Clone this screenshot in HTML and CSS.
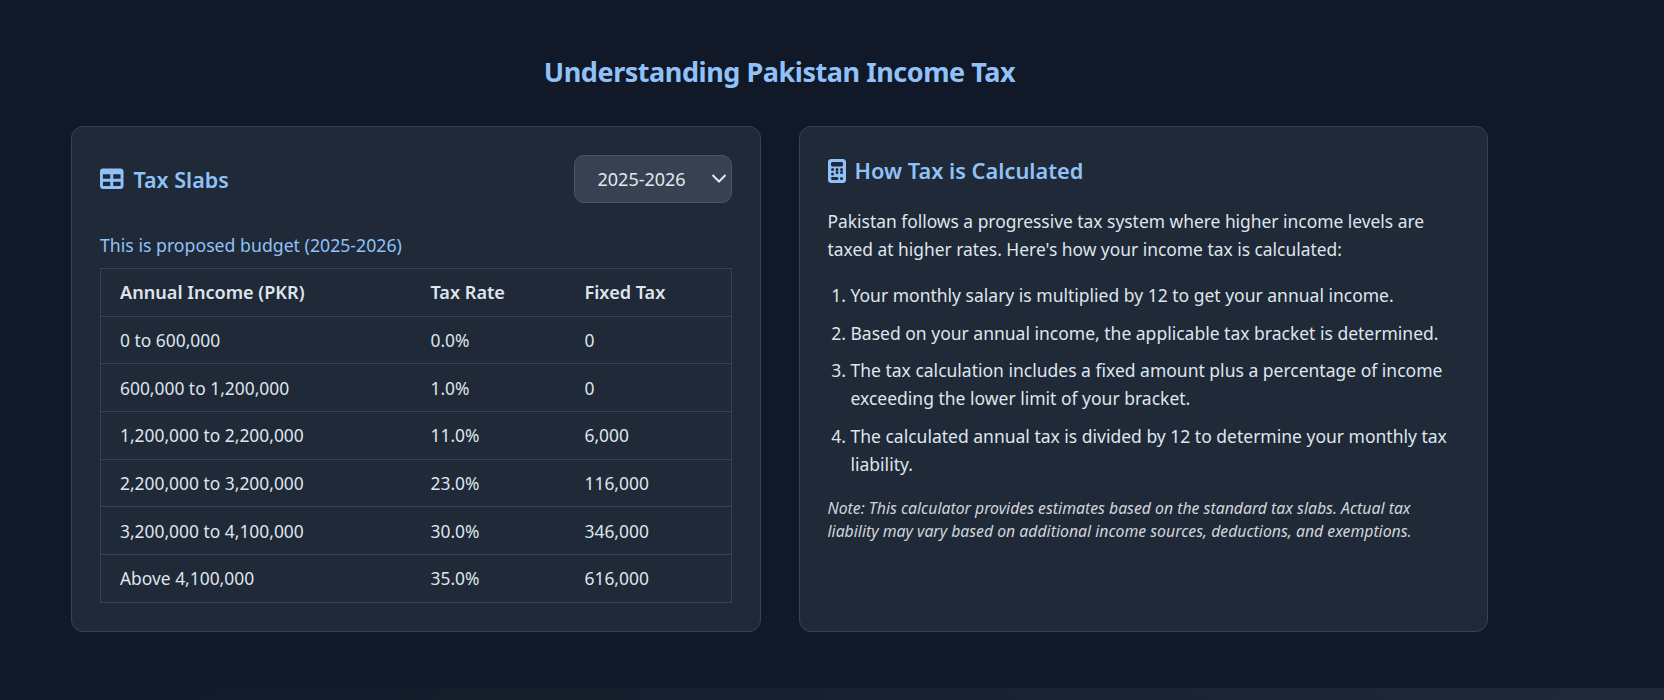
FILE: index.html
```html
<!DOCTYPE html>
<html lang="en">
<head>
    <meta charset="UTF-8">
    <meta name="viewport" content="width=device-width, initial-scale=1.0">
    <title>Understanding Pakistan Income Tax</title>
    <link rel="stylesheet" href="styles.css">
</head>
<body>
    <main class="info-section">
        <h2 class="section-title">Understanding Pakistan Income Tax</h2>
        <div class="info-grid">
            <section class="card">
                <div class="card-top">
                    <h3 class="card-title">
                        <svg class="icon icon-table" viewBox="0 0 512 512"><path d="M64 256l0-96 160 0 0 96L64 256zm0 64l160 0 0 96L64 416l0-96zm224 96l0-96 160 0 0 96-160 0zM448 256l-160 0 0-96 160 0 0 96zM64 32C28.7 32 0 60.7 0 96L0 416c0 35.3 28.7 64 64 64l384 0c35.3 0 64-28.7 64-64l0-320c0-35.3-28.7-64-64-64L64 32z"/></svg>
                        Tax Slabs
                    </h3>
                    <div class="year-select">
                        <select>
                            <option>2025-2026</option>
                            <option>2024-2025</option>
                        </select>
                        <svg class="chevron" viewBox="0 0 16 16"><path d="M1.500 4 8 10.500 14.500 4"/></svg>
                    </div>
                </div>
                <p class="budget-note">This is proposed budget (2025-2026)</p>
                <table class="slabs">
                    <thead>
                        <tr>
                            <th>Annual Income (PKR)</th>
                            <th>Tax Rate</th>
                            <th>Fixed Tax</th>
                        </tr>
                    </thead>
                    <tbody>
                        <tr><td>0 to 600,000</td><td>0.0%</td><td>0</td></tr>
                        <tr><td>600,000 to 1,200,000</td><td>1.0%</td><td>0</td></tr>
                        <tr><td>1,200,000 to 2,200,000</td><td>11.0%</td><td>6,000</td></tr>
                        <tr><td>2,200,000 to 3,200,000</td><td>23.0%</td><td>116,000</td></tr>
                        <tr><td>3,200,000 to 4,100,000</td><td>30.0%</td><td>346,000</td></tr>
                        <tr><td>Above 4,100,000</td><td>35.0%</td><td>616,000</td></tr>
                    </tbody>
                </table>
            </section>

            <section class="card">
                <h3 class="card-title how-title">
                    <svg class="icon icon-calc" viewBox="0 0 384 512"><path d="M64 0C28.7 0 0 28.7 0 64L0 448c0 35.3 28.7 64 64 64l256 0c35.3 0 64-28.7 64-64l0-384c0-35.3-28.7-64-64-64L64 0zM96 64l192 0c17.7 0 32 14.3 32 32l0 32c0 17.7-14.3 32-32 32L96 160c-17.7 0-32-14.3-32-32l0-32c0-17.7 14.3-32 32-32zm32 160a32 32 0 1 1 -64 0 32 32 0 1 1 64 0zM96 352a32 32 0 1 1 0-64 32 32 0 1 1 0 64zM64 416c0-17.7 14.3-32 32-32l96 0c17.7 0 32 14.3 32 32s-14.3 32-32 32l-96 0c-17.7 0-32-14.3-32-32zM192 256a32 32 0 1 1 0-64 32 32 0 1 1 0 64zm32 32a32 32 0 1 1 -64 0 32 32 0 1 1 64 0zm64-32a32 32 0 1 1 0-64 32 32 0 1 1 0 64zm32 32a32 32 0 1 1 -64 0 32 32 0 1 1 64 0zM288 448a32 32 0 1 1 0-64 32 32 0 1 1 0 64z"/></svg>
                    How Tax is Calculated
                </h3>
                <p class="how-text">Pakistan follows a progressive tax system where higher income levels are taxed at higher rates. Here's how your income tax is calculated:</p>
                <ol class="how-steps">
                    <li>Your monthly salary is multiplied by 12 to get your annual income.</li>
                    <li>Based on your annual income, the applicable tax bracket is determined.</li>
                    <li>The tax calculation includes a fixed amount plus a percentage of income exceeding the lower limit of your bracket.</li>
                    <li>The calculated annual tax is divided by 12 to determine your monthly tax liability.</li>
                </ol>
                <p class="how-note">Note: This calculator provides estimates based on the standard tax slabs. Actual tax liability may vary based on additional income sources, deductions, and exemptions.</p>
            </section>
        </div>
    </main>
    <footer class="page-footer"></footer>
</body>
</html>
```

FILE: styles.css
```css
* {
    box-sizing: border-box;
}

body {
    margin: 0;
    height: 700px;
    overflow: hidden;
    display: flex;
    flex-direction: column;
    font-family: "Noto Sans", "Open Sans", sans-serif;
    color: #dfe5ec;
    background-color: #111827;
}

.info-section {
    flex: 1;
    padding: 53px 176px 0 71px;
}

.section-title {
    margin: 0 0 35px;
    text-align: center;
    font-size: 27px;
    line-height: 38px;
    font-weight: 700;
    letter-spacing: -0.45px;
    color: #90c2f9;
}

.info-grid {
    display: grid;
    grid-template-columns: 1fr 1fr;
    gap: 38px;
}

.card {
    height: 506px;
    padding: 28px;
    background-color: #1f2937;
    border: 1px solid #374151;
    border-radius: 12px;
}

.card-top {
    display: flex;
    justify-content: space-between;
    align-items: center;
    margin-bottom: 29px;
}

.card-title {
    display: flex;
    align-items: center;
    gap: 10px;
    margin: 0;
    font-size: 21.5px;
    font-weight: 600;
    color: #90c2f9;
}

.icon {
    fill: #90c2f9;
    flex: none;
}

.icon-table {
    width: 23.5px;
    height: 23.5px;
}

.icon-calc {
    width: 18px;
    height: 24px;
}

.how-title {
    gap: 9px;
    margin: 1px 0 22px;
    font-size: 21.8px;
}

.year-select {
    position: relative;
}

.year-select select {
    appearance: none;
    display: block;
    width: 158px;
    height: 48px;
    padding: 0 0 0 23px;
    font: inherit;
    font-size: 18px;
    color: #e2e8f0;
    background-color: #374151;
    border: 1px solid #4b5563;
    border-radius: 10px;
}

.chevron {
    position: absolute;
    top: 16px;
    right: 5px;
    width: 16px;
    height: 16px;
    fill: none;
    stroke: #e2e8f0;
    stroke-width: 2;
}

.budget-note {
    margin: 0 0 10px;
    font-size: 17.7px;
    line-height: 26px;
    color: #90c2f9;
}

.slabs {
    width: 100%;
    border-collapse: collapse;
    table-layout: fixed;
    font-size: 17.4px;
}

.slabs th,
.slabs td {
    height: 47.7px;
    padding: 0 19px;
    text-align: left;
    border: 1px solid #374151;
    border-left: none;
    border-right: none;
}

.slabs tr th:first-child,
.slabs tr td:first-child {
    width: 311px;
    border-left: 1px solid #374151;
}

.slabs tr th:nth-child(2),
.slabs tr td:nth-child(2) {
    width: 154px;
}

.slabs tr th:last-child,
.slabs tr td:last-child {
    border-right: 1px solid #374151;
}

.slabs th {
    font-size: 18.1px;
    font-weight: 600;
}

.how-text {
    margin: 0 0 18px;
    font-size: 17.4px;
    line-height: 28px;
}

.how-steps {
    margin: 0 0 19px;
    padding-left: 23px;
    font-size: 17.5px;
    line-height: 28px;
}

.how-steps li {
    margin-bottom: 9.5px;
}

.how-note {
    margin: 0;
    font-size: 15.8px;
    line-height: 23.5px;
    font-style: italic;
    color: #d1d5db;
}

.page-footer {
    height: 12px;
    background: linear-gradient(to right, #111827, #1f2937);
}
```
